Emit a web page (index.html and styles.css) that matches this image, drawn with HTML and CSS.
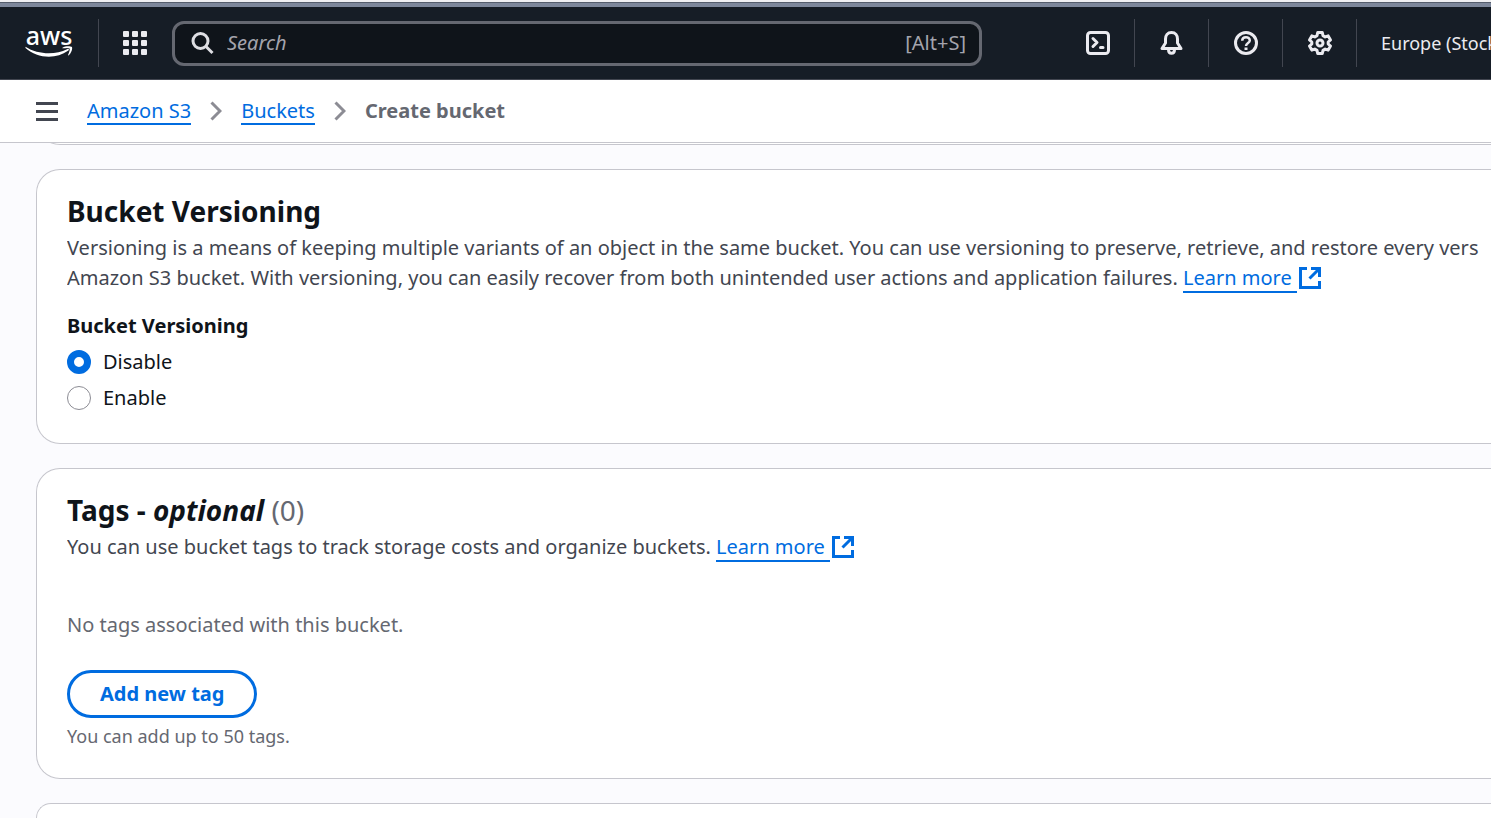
FILE: index.html
```html
<!DOCTYPE html>
<html lang="en">
<head>
<meta charset="utf-8">
<title>Create bucket</title>
<link rel="stylesheet" href="styles.css">
</head>
<body>
<div class="window-edge"></div>
<header class="topbar">
  <a class="logo" href="#" aria-label="AWS home">
    <span class="logo-text">aws</span>
    <svg class="smile" viewBox="0 0 48 12" aria-hidden="true"><path d="M0.500 0.800C13 9 31 9 42 3.200C44 2.200 44.600 3.600 43 4.800C31 13.600 12 12.500 0.500 2Z"/><path d="M37.500 1.700C40 -0.200 45.500 -0.200 46.700 0.800C48 2 46.500 7 43.800 9.200C43.200 9.600 42.900 9.300 43.200 8.600C44.200 6 45.200 3.500 44.500 2.500C43.700 1.500 40.500 2 38 2.300C37.200 2.400 37 2 37.500 1.700Z"/></svg>
  </a>
  <button class="cell apps" aria-label="Services">
    <svg width="26" height="26" viewBox="0 0 26 26" fill="currentColor"><rect x="1" y="1" width="6" height="6" rx="1"/><rect x="10" y="1" width="6" height="6" rx="1"/><rect x="19" y="1" width="6" height="6" rx="1"/><rect x="1" y="10" width="6" height="6" rx="1"/><rect x="10" y="10" width="6" height="6" rx="1"/><rect x="19" y="10" width="6" height="6" rx="1"/><rect x="1" y="19" width="6" height="6" rx="1"/><rect x="10" y="19" width="6" height="6" rx="1"/><rect x="19" y="19" width="6" height="6" rx="1"/></svg>
  </button>
  <label class="search">
    <svg width="24" height="24" viewBox="0 0 24 24" fill="none" stroke="currentColor" stroke-width="3"><circle cx="9.500" cy="10" r="7.500"/><path d="M15 15.500L21.500 22"/></svg>
    <input type="text" placeholder="Search" aria-label="Search">
    <span class="shortcut">[Alt+S]</span>
  </label>
  <nav class="tools" aria-label="Tools">
    <button class="cell" aria-label="CloudShell">
      <svg width="26" height="26" viewBox="0 0 26 26" fill="none" stroke="currentColor" stroke-width="3" stroke-linejoin="round"><rect x="2.500" y="2.500" width="21" height="21" rx="3"/><path stroke-linecap="round" d="M8 8.500L12 12.500L8 16.500M15.500 17.500H18"/></svg>
    </button>
    <button class="cell" aria-label="Notifications">
      <svg width="26" height="26" viewBox="0 0 26 26" fill="none" stroke="currentColor" stroke-width="3" stroke-linejoin="round"><path d="M12.500 2.500C8.500 2.500 6.500 5.500 6.500 9V13L3 18.500H22L18.500 13V9C18.500 5.500 16.500 2.500 12.500 2.500Z"/><path d="M9.500 19.500C9.500 24.500 15.500 24.500 15.500 19.500"/></svg>
    </button>
    <button class="cell" aria-label="Help">
      <svg width="26" height="26" viewBox="0 0 26 26" fill="none" stroke="currentColor" stroke-width="3"><circle cx="13" cy="13" r="10.500"/><path stroke-width="2.500" d="M9.200 10.700C9.200 6 16.800 6 16.800 10.500C16.800 13 13 13 13 16"/><path d="M13 17.500V20"/></svg>
    </button>
    <button class="cell" aria-label="Settings">
      <svg width="26" height="26" viewBox="0 0 26 26" fill="none" stroke="currentColor" stroke-width="3" stroke-linejoin="round"><path d="M10.700 2.500H15.300L16 5.600L18.200 6.900L21.200 5.900L23.500 9.900L21.200 12V14L23.500 16.100L21.200 20.100L18.200 19.100L16 20.400L15.300 23.500H10.700L10 20.400L7.800 19.100L4.800 20.100L2.500 16.100L4.800 14V12L2.500 9.900L4.800 5.900L7.800 6.900L10 5.600Z"/><circle cx="13" cy="13" r="3"/></svg>
    </button>
    <button class="region">Europe (Stock</button>
  </nav>
</header>
<nav class="crumbs" aria-label="Breadcrumbs">
  <button class="menu" aria-label="Open navigation"><svg width="22" height="20" viewBox="0 0 22 20" stroke="currentColor" stroke-width="3"><path d="M0 2.500H22M0 10.500H22M0 18.500H22"/></svg></button>
  <a href="#">Amazon S3</a>
  <svg class="chev" width="12" height="20" viewBox="0 0 12 20"><path d="M1.500 1.500L10 10L1.500 18.500"/></svg>
  <a href="#">Buckets</a>
  <svg class="chev" width="12" height="20" viewBox="0 0 12 20"><path d="M1.500 1.500L10 10L1.500 18.500"/></svg>
  <span class="current">Create bucket</span>
</nav>
<main class="content">
  <div class="card card-above"></div>
  <section class="card">
    <h2>Bucket Versioning</h2>
    <p class="desc">Versioning is a means of keeping multiple variants of an object in the same bucket. You can use versioning to preserve, retrieve, and restore every vers<br>Amazon S3 bucket. With versioning, you can easily recover from both unintended user actions and application failures. <a href="#">Learn more&nbsp;</a><svg class="ext" width="22" height="22" viewBox="0 0 22 22"><path d="M8 1.500H1.500V20.500H20.500V14M12 1.500H20.500V10M20 2L10.500 11.500"/></svg></p>
    <fieldset class="choices">
      <legend>Bucket Versioning</legend>
      <label><input type="radio" name="versioning" checked>Disable</label>
      <label><input type="radio" name="versioning">Enable</label>
    </fieldset>
  </section>
  <section class="card">
    <h2>Tags - <em>optional</em> <span class="count">(0)</span></h2>
    <p class="desc">You can use bucket tags to track storage costs and organize buckets. <a href="#">Learn more&nbsp;</a><svg class="ext" width="22" height="22" viewBox="0 0 22 22"><path d="M8 1.500H1.500V20.500H20.500V14M12 1.500H20.500V10M20 2L10.500 11.500"/></svg></p>
    <p class="empty">No tags associated with this bucket.</p>
    <button class="add">Add new tag</button>
    <p class="hint">You can add up to 50 tags.</p>
  </section>
  <div class="card card-below"></div>
</main>
</body>
</html>
```
FILE: styles.css
```css
* { box-sizing: border-box; }
body {
  margin: 0;
  height: 100vh;
  display: flex;
  flex-direction: column;
  overflow: hidden;
  background: #fbfbfe;
  color: #0f141a;
  font: 20px/30px "Noto Sans", sans-serif;
}
button { font: inherit; border: 0; background: none; padding: 0; color: inherit; }
svg { display: block; flex: none; }
p, h2 { margin: 0; }
a { color: #006ce0; text-decoration: none; border-bottom: 2px solid #006ce0; }

.window-edge { flex: none; height: 7px; background: #7d879b; border-top: 2px solid #f0f0f3; box-shadow: inset 0 1px #555d6c; }
.topbar {
  flex: none;
  display: flex;
  align-items: center;
  height: 73px;
  background: #161d26;
  border-bottom: 1px solid #424650;
  color: #ebebf0;
}
.logo {
  display: flex;
  flex-direction: column;
  align-items: center;
  justify-content: center;
  width: 99px;
  height: 48px;
  padding-bottom: 4px;
  border: 0;
  border-right: 1px solid #424650;
  color: #fff;
  flex: none;
}
.logo-text { font: 500 25px/22px "Noto Sans", sans-serif; }
.smile { width: 48px; height: 12px; fill: #fff; }
.cell { display: flex; align-items: center; justify-content: center; width: 74px; height: 48px; flex: none; }
.tools .cell { border-right: 1px solid #424650; }
.apps { width: 72px; margin-right: 1px; }
.search {
  display: flex;
  align-items: center;
  flex: 0 1 810px;
  min-width: 0;
  height: 45px;
  padding: 0 13px 0 16px;
  border: 3px solid #656871;
  border-radius: 12px;
  background: #0f141a;
  color: #b4b4bb;
}
.search svg { color: #dedee3; }
.search input {
  flex: 1;
  min-width: 0;
  padding: 0 0 0 12px;
  border: 0;
  outline: 0;
  background: none;
  color: inherit;
  font: inherit;
}
.search input::placeholder { color: #a4a4ad; opacity: 1; font-style: italic; }
.shortcut { color: #a4a4ad; }
.tools { display: flex; margin-left: auto; flex: none; }
.region { width: 134px; padding-left: 24px; font-size: 18px; text-align: left; white-space: nowrap; overflow: hidden; }

.crumbs {
  flex: none;
  display: flex;
  align-items: center;
  height: 63px;
  padding-left: 36px;
  background: #fff;
  border-bottom: 1px solid #c6c6cd;
}
.crumbs a { padding-top: 2px; line-height: 24px; }
.menu { margin-right: 29px; color: #424650; }
.chev { margin: 0 19px; fill: none; stroke: #8c8c94; stroke-width: 3; }
.current { font-weight: 700; color: #656871; }

.content { flex: 1; min-height: 0; display: flex; flex-direction: column; gap: 24px; padding-left: 36px; }
.card {
  flex: none;
  padding: 22px 0 30px 30px;
  border: 1px solid #c6c6cd;
  border-right: 0;
  border-radius: 24px 0 0 24px;
  background: #fff;
}
.card-above { height: 60px; margin-top: -58px; padding: 0; clip-path: inset(58px 0 0 0); }
.card-below { flex: 1; min-height: 0; padding: 0; border-bottom: 0; border-radius: 24px 0 0 0; clip-path: inset(0); }
h2 { margin-bottom: 3px; font-size: 28px; line-height: 38px; font-weight: 700; }
.count { font-weight: 400; color: #656871; }
.desc { color: #424650; white-space: nowrap; overflow: hidden; }
.ext { display: inline-block; vertical-align: -4px; margin-left: 2px; fill: none; stroke: #006ce0; stroke-width: 3; }
.choices { margin: 18px 0 0; padding: 0; border: 0; }
.choices legend { padding: 0; font-weight: 700; }
.choices label { display: flex; align-items: center; gap: 12px; margin-top: 6px; }
.choices input {
  appearance: none;
  width: 24px;
  height: 24px;
  margin: 0;
  border: 1px solid #8c8c94;
  border-radius: 50%;
  background: #fff;
}
.choices input:checked { border: 7px solid #006ce0; }
.empty { margin-top: 48px; color: #656871; }
.add {
  display: block;
  height: 48px;
  margin-top: 30px;
  padding: 0 30px;
  border: 3px solid #006ce0;
  border-radius: 24px;
  color: #006ce0;
  font-weight: 700;
}
.hint { margin-top: 6px; font-size: 18px; line-height: 24px; color: #656871; }
```
